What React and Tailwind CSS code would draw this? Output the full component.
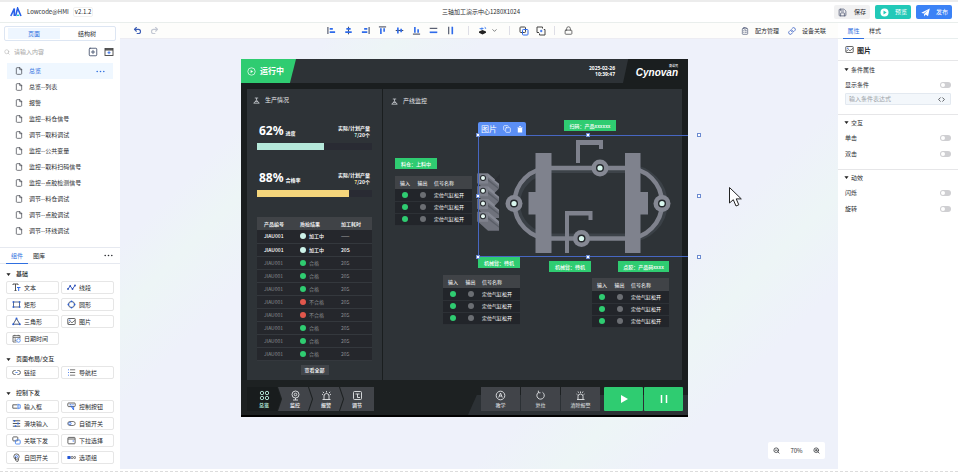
import React from "react";
import {
  ChevronDown, ClipboardList, Code, Copy, File, Link, Lock, Redo2, Save, Search, SquarePlus, Undo2, ZoomIn, ZoomOut,
} from "lucide-react";

const pages = [
  "总览", "总览--列表", "报警", "监控--料仓信号", "调节--取料调试", "监控--公共变量",
  "监控--取料扫码信号", "监控--点胶检测信号", "调节--料仓调试", "调节--点胶调试", "调节--环线调试",
];

const ic = "size-[9px] shrink-0";

const TextIcon = () => (
  <svg className={ic} viewBox="0 0 9 9" fill="none">
    <path d="M1 2V1H6V2M3.5 1V7.5M2.5 7.5H4.5" stroke="#444" strokeWidth="0.9" />
    <path d="M5 4.5H8.5M6.7 4.5V8" stroke="#2f6bea" strokeWidth="1" />
  </svg>
);
const PolyIcon = () => (
  <svg className={ic} viewBox="0 0 9 9" fill="none">
    <path d="M1 6L3.2 3L5.5 6L8 2.5" stroke="#2b4fb8" strokeWidth="0.9" />
    <g fill="#2b4fb8"><circle cx="1" cy="6" r="0.9" /><circle cx="3.2" cy="3" r="0.9" /><circle cx="5.5" cy="6" r="0.9" /><circle cx="8" cy="2.5" r="0.9" /></g>
  </svg>
);
const RectIcon = () => (
  <svg className={ic} viewBox="0 0 9 9">
    <rect x="1.5" y="2" width="6" height="5" fill="none" stroke="#3a4a6a" strokeWidth="0.8" />
    <g fill="#2b5fd8"><rect x="0.6" y="1.2" width="1.6" height="1.6" /><rect x="6.8" y="1.2" width="1.6" height="1.6" /><rect x="0.6" y="6.2" width="1.6" height="1.6" /><rect x="6.8" y="6.2" width="1.6" height="1.6" /></g>
  </svg>
);
const CircleIcon = () => (
  <svg className={ic} viewBox="0 0 9 9">
    <circle cx="4.5" cy="4.5" r="3" fill="none" stroke="#3a4a6a" strokeWidth="0.9" />
    <g fill="#2b5fd8"><circle cx="4.5" cy="1.4" r="0.9" /><circle cx="4.5" cy="7.6" r="0.9" /><circle cx="1.4" cy="4.5" r="0.9" /><circle cx="7.6" cy="4.5" r="0.9" /></g>
  </svg>
);
const TriIcon = () => (
  <svg className={ic} viewBox="0 0 9 9">
    <path d="M4.5 1.5L7.8 7.2H1.2Z" fill="none" stroke="#3a4a6a" strokeWidth="0.9" />
    <g fill="#2b5fd8"><circle cx="4.5" cy="1.6" r="1" /><circle cx="7.8" cy="7.2" r="1" /><circle cx="1.2" cy="7.2" r="1" /></g>
  </svg>
);
const ImgIcon = () => (
  <svg className={ic} viewBox="0 0 9 9" fill="none">
    <rect x="0.8" y="1.5" width="7.4" height="6" rx="0.6" stroke="#555" strokeWidth="0.9" />
    <path d="M1 6.5L3.5 4.6L5 5.8L8 3.2" stroke="#555" strokeWidth="0.8" />
    <circle cx="2.8" cy="3.3" r="0.7" fill="#2f6bea" />
  </svg>
);
const InputIcon = () => (
  <svg className={ic} viewBox="0 0 9 9" fill="none">
    <path d="M5.5 2.8H0.8V6.2H5.5" stroke="#555" strokeWidth="0.9" />
    <path d="M6 2.8H8.2V6.2H6M6 1.8V7.2" stroke="#4a86f0" strokeWidth="0.9" />
  </svg>
);
const ControlIcon = () => (
  <svg className={ic} viewBox="0 0 9 9" fill="none">
    <rect x="0.8" y="1" width="7.4" height="3.6" rx="0.8" stroke="#555" strokeWidth="0.9" />
    <path d="M2.6 2.8H4.4M5.4 2.8H6.6" stroke="#2f6bea" strokeWidth="1" />
    <path d="M4 4L6.6 8V5.5Z" stroke="#2f6bea" strokeWidth="0.9" />
  </svg>
);
const SliderIcon = () => (
  <svg className={ic} viewBox="0 0 9 9" fill="none">
    <path d="M0.8 1.8H8.2M0.8 4.5H8.2M0.8 7.2H8.2" stroke="#444" strokeWidth="0.9" />
    <path d="M2.5 0.9V2.7M6 3.6V5.4M3.5 6.3V8.1" stroke="#2f6bea" strokeWidth="1.3" />
  </svg>
);
const SwitchIcon = () => (
  <svg className={ic} viewBox="0 0 9 9" fill="none">
    <rect x="0.8" y="2.5" width="7.4" height="4" rx="2" stroke="#555" strokeWidth="0.8" />
    <circle cx="2.9" cy="4.5" r="1.2" stroke="#2f6bea" strokeWidth="0.8" />
  </svg>
);
const RelateIcon = () => (
  <svg className={ic} viewBox="0 0 9 9" fill="none">
    <rect x="0.8" y="0.9" width="5" height="4" rx="0.8" stroke="#555" strokeWidth="0.9" />
    <rect x="3.4" y="4" width="4.8" height="4" rx="0.8" stroke="#4a86f0" strokeWidth="0.9" />
  </svg>
);
const SelectIcon = () => (
  <svg className={ic} viewBox="0 0 9 9" fill="none">
    <rect x="0.9" y="1.4" width="7.2" height="6.4" rx="0.8" stroke="#555" strokeWidth="0.9" />
    <path d="M1 3H8" stroke="#555" strokeWidth="0.9" /><path d="M5.6 5H7" stroke="#2f6bea" strokeWidth="0.9" />
  </svg>
);
const ReturnIcon = () => (
  <svg className={ic} viewBox="0 0 9 9" fill="none">
    <circle cx="4.5" cy="3.6" r="2.7" stroke="#555" strokeWidth="0.9" /><circle cx="4.5" cy="3.6" r="1" stroke="#2f6bea" strokeWidth="0.8" />
    <path d="M3.5 4V7L4.5 8.3H6L6.6 6" stroke="#555" strokeWidth="0.9" />
  </svg>
);
const OptionIcon = () => (
  <svg className={ic} viewBox="0 0 9 9" fill="none">
    <rect x="0.4" y="3" width="3.2" height="3" rx="0.6" fill="#2457d6" />
    <circle cx="5.1" cy="4.5" r="1.1" stroke="#555" strokeWidth="0.8" /><circle cx="7.7" cy="4.5" r="1" stroke="#555" strokeWidth="0.8" />
  </svg>
);
const LinkIcon = () => (
  <svg className={ic} viewBox="0 0 9 9" fill="none" strokeWidth="0.9">
    <path d="M3.6 2.5H2.6A2 2 0 0 0 2.6 6.5H3.6M5.4 2.5H6.4A2 2 0 0 1 6.4 6.5H5.4" stroke="#555" /><path d="M3.4 4.5H5.6" stroke="#4a86f0" />
  </svg>
);
const NavIcon = () => (
  <svg className={ic} viewBox="0 0 9 9" fill="none" strokeWidth="0.8">
    <path d="M3 1.8H8.2M3 4.5H8.2M3 7.2H8.2" stroke="#555" /><path d="M1 1.8H2M1 4.5H2M1 7.2H2" stroke="#2f6bea" />
  </svg>
);
const DateIcon = () => (
  <svg className={ic} viewBox="0 0 9 9" fill="none" strokeWidth="0.8">
    <path d="M4.5 8H1V1.6H8V4.5M1 3.4H8M2.8 0.8V2.2M6.2 0.8V2.2M2.5 5H4M2.5 6.4H4" stroke="#555" />
    <circle cx="6.5" cy="6.5" r="1.8" stroke="#4a86f0" />
  </svg>
);

const groups = [
  { title: "基础", items: [["文本", TextIcon], ["线段", PolyIcon], ["矩形", RectIcon], ["圆形", CircleIcon], ["三角形", TriIcon], ["图片", ImgIcon], ["日期时间", DateIcon]] },
  { title: "页面布局/交互", items: [["链接", LinkIcon], ["导航栏", NavIcon]] },
  { title: "控制下发", items: [["输入框", InputIcon], ["控制按钮", ControlIcon], ["滑块输入", SliderIcon], ["自锁开关", SwitchIcon], ["关联下发", RelateIcon], ["下拉选择", SelectIcon], ["自回开关", ReturnIcon], ["选项组", OptionIcon]] },
];

const Caret = () => (
  <svg className="size-[5px] shrink-0" viewBox="0 0 5 5"><path d="M0.4 1.2H4.6L2.5 4Z" fill="#222" /></svg>
);
const Dots = ({ className }) => (
  <svg className={`h-[3px] w-[9px] ${className}`} viewBox="0 0 9 3" fill="currentColor"><circle cx="1.2" cy="1.5" r="0.8" /><circle cx="4.5" cy="1.5" r="0.8" /><circle cx="7.8" cy="1.5" r="0.8" /></svg>
);

function Header() {
  return (
    <header className="flex h-[23px] shrink-0 items-center border-t-2 border-b border-t-[#ececec] border-b-[#e9eeec] bg-white px-[6px]">
      <div className="flex flex-1 items-center pl-1">
        <svg className="h-[10px] w-3" viewBox="0 0 12 10" fill="none">
          <path d="M0.8 9L4.3 1.5V9" stroke="#2a62e8" strokeWidth="1.6" />
          <path d="M5.6 9L7.6 1.2L11 9" stroke="#2a62e8" strokeWidth="1.6" />
          <path d="M7 8.3H9.2" stroke="#21c7c0" strokeWidth="1.4" />
        </svg>
        <span className="ml-[5px]">Lowcode@HMI</span>
        <span className="ml-1 rounded-xs border border-[#f1f1f1] px-px">v2.1.2</span>
      </div>
      <h1>三轴加工演示中心1280X1024</h1>
      <div className="flex flex-1 justify-end gap-[5px]">
        <button className="flex h-[14px] w-9 items-center justify-between rounded-xs bg-[#f1f1f2] pr-1 pl-1"><Save className="size-[9px] text-[#4b5470]" />保存</button>
        <button className="flex h-[14px] w-9 items-center justify-between rounded-xs bg-[#22c9b8] pr-1 pl-[5px] text-white">
          <svg className="size-[9px]" viewBox="0 0 9 9"><circle cx="4.5" cy="4.5" r="4" fill="#fff" /><path d="M3.5 2.5V6.5L6.6 4.5Z" fill="#22c9b8" /></svg>预览
        </button>
        <button className="flex h-[14px] w-9 items-center justify-between rounded-xs bg-[#3b82f6] pr-1 pl-[5px] text-white">
          <svg className="size-[9px]" viewBox="0 0 9 9"><path d="M0.3 4.8L8.8 0.4L7 8.2L4.6 6.6L3.4 8.5L3 5.9L7 2.3L2.4 5.6Z" fill="#fff" /></svg>发布
        </button>
      </div>
    </header>
  );
}

function Sidebar() {
  return (
    <aside className="flex w-[120px] shrink-0 flex-col overflow-hidden bg-white">
      <div className="mx-1 mt-[3px] grid h-[15px] shrink-0 grid-cols-2 rounded-xs border border-[#dde6f3] p-px">
        <button className="ml-[2px] bg-[#eef6ff] text-[#2f6fe0]">页面</button>
        <button>结构树</button>
      </div>
      <div className="flex h-[22px] shrink-0 items-center pr-[6px] pl-1">
        <Search className="size-[6px] text-[#aaa]" />
        <input aria-label="搜索" placeholder="请输入内容" className="ml-1 min-w-0 flex-1 outline-none placeholder:text-[#a5a5a5]" />
        <button aria-label="新建页面"><SquarePlus className="size-[10px] text-[#3d4a68]" /></button>
        <button aria-label="新建分组" className="ml-[6px]">
          <svg className="size-[10px]" viewBox="0 0 10 10" fill="none" stroke="#444" strokeWidth="0.9"><rect x="1" y="1.5" width="8" height="7" /><path d="M1 2.8H9" strokeWidth="1.4" /><path d="M5 4.2V7.2M3.5 5.7H6.5" stroke="#2f6bea" /></svg>
        </button>
      </div>
      <ul className="shrink-0 px-[7px]">
        {pages.map((p, i) => (
          <li key={p} className={`flex h-4 items-center pl-2 ${i === 0 ? "bg-[#eff7ff] text-[#2f6fe0]" : ""}`}>
            <File className="size-2 text-[#33363f]" />
            <a href="#" className="ml-[6px]">{p}</a>
            {i === 0 && <Dots className="mr-2 ml-auto" />}
          </li>
        ))}
      </ul>
      <div className="mt-2 flex h-[17px] shrink-0 border-y border-[#e6e9f0] pr-[7px] pl-[6px]">
        <button className="-mb-px w-[22px] border-b border-[#2f6fe0] text-[#2f6fe0]">组件</button>
        <button className="w-[22px]">图库</button>
        <Dots className="my-auto ml-auto" />
      </div>
      <div className="flex flex-col gap-[7px] px-[6px] pt-[3px]">
        {groups.map((g) => (
          <section key={g.title}>
            <h2 className="flex h-[14px] items-center gap-[5px] font-medium"><Caret />{g.title}</h2>
            <div className="grid grid-cols-2 gap-x-[2px] gap-y-1">
              {g.items.map(([name, Icon]) => (
                <button key={name} className="flex h-[13px] items-center gap-[3px] rounded-xs border border-[#e6e6e6] pl-[5px] whitespace-nowrap"><Icon />{name}</button>
              ))}
            </div>
          </section>
        ))}
      </div>
      <div className="mt-1 mr-[61px] ml-[6px] h-1 shrink-0 rounded-t-xs border border-b-0 border-[#e6e6e6]" />
    </aside>
  );
}

const alignIcons = [
  ["左对齐", "M1 1V9", "M3 3.2H6.5M3 6.8H9"],
  ["水平居中", "M5 0.8V9.2", "M2.6 3.2H7.4M1.4 6.8H8.6"],
  ["右对齐", "M9 1V9", "M3.5 3.2H7M1 6.8H7"],
  ["顶对齐", "M1 1H9", "M3.2 2.6V9M6.8 2.6V6.5"],
  ["垂直居中", "M0.8 5H9.2", "M3.2 1.8V8.2M6.8 3V7"],
  ["底对齐", "M1 9H9", "M3.2 1V7.4M6.8 3.5V7.4"],
  ["纵向等距", "M0.8 2.6H9.2", "M0.8 7H9.2"],
  ["横向等距", "M3 0.8V9.2", "M7 0.8V9.2"],
];
const Sep = () => <span className="h-[9px] w-px bg-[#dedee6]" />;

function Toolbar() {
  return (
    <div className="flex h-4 shrink-0 items-center justify-between border-b border-[#ececf2] bg-[#fdfdfb] pr-3 pl-[13px]">
      <div className="flex gap-2">
        <button aria-label="撤销"><Undo2 className="size-[9px] text-[#3c5db5]" strokeWidth={3} /></button>
        <button aria-label="重做"><Redo2 className="size-[9px] text-[#c3c8d3]" strokeWidth={3} /></button>
      </div>
      <div className="flex items-center">
        <div className="flex gap-2">
          {alignIcons.map(([label, dark, blue]) => (
            <button key={label} aria-label={label}>
              <svg className="size-[9px]" viewBox="0 0 10 10" fill="none"><path d={dark} stroke="#454c60" strokeWidth="1.2" /><path d={blue} stroke="#2f6bea" strokeWidth="1.8" /></svg>
            </button>
          ))}
        </div>
        <span className="w-[13px]" /><Sep /><span className="w-[9px]" />
        <button aria-label="层级" className="flex items-center gap-1">
          <svg className="size-[9px]" viewBox="0 0 9 9"><path d="M1 5.5L4.5 3.9L8 5.5V6.8L4.5 8.6L1 6.8Z" fill="#222" /><path d="M1 2.8L4 1.4L6 2.4L3.8 3.8ZM6.5 0.5L8.4 2.2L7 3Z" fill="#4a86f0" /></svg>
          <ChevronDown className="size-[7px]" />
        </button>
        <span className="w-[11px]" /><Sep /><span className="w-[9px]" />
        <button aria-label="组合">
          <svg className="size-[10px]" viewBox="0 0 10 10" fill="none"><rect x="1" y="1" width="5.5" height="5.5" rx="0.8" stroke="#444" /><rect x="3.5" y="3.5" width="5.5" height="5.5" rx="0.8" stroke="#2f6bea" /></svg>
        </button>
        <button aria-label="取消组合" className="ml-[7px]">
          <svg className="size-[10px]" viewBox="0 0 10 10" fill="none" stroke="#444"><path d="M3 6.5H1V1H6.5V2.5M3.5 7.5V9H9V3.5H7.8" /><path d="M4 5H6.4M5.2 3.8V6.2" stroke="#2f6bea" /></svg>
        </button>
        <span className="w-2" /><Sep /><span className="w-[9px]" />
        <button aria-label="锁定"><Lock className="size-[9px] text-[#444]" /></button>
      </div>
      <div className="flex items-center">
        <button className="flex items-center gap-[6px]"><ClipboardList className="size-2 text-[#4a5573]" />配方管理</button>
        <button className="ml-[9px] flex items-center gap-[6px]"><Link className="size-2 text-[#3c62c4]" strokeWidth={2.5} />设备关联</button>
      </div>
    </div>
  );
}

const results = [
  ["加工中", "——", "run"], ["加工中", "20S", "run"], ["合格", "20S", "ok"], ["合格", "20S", "ok"], ["合格", "20S", "ok"],
  ["不合格", "20S", "bad"], ["不合格", "20S", "bad"], ["合格", "20S", "ok"], ["合格", "20S", "ok"], ["合格", "20S", "ok"],
];
const dot = { run: "bg-[#cdf3ea]", ok: "bg-[#2fcc71]", bad: "bg-[#e2574c]" };

const PanelTitle = ({ children }) => (
  <h2 className="flex items-center gap-[5px] text-[#e6e8ea]">
    <svg className="size-[7px]" viewBox="0 0 7 7" fill="none" stroke="#c8ccd0" strokeWidth="0.8"><path d="M1.8 1H5.2M3.5 1V3L1 6M3.5 3L6 6M0.5 6.2H6.5M2 4.6H5" /></svg>
    {children}
  </h2>
);

function Progress({ value, label, fill, accent }) {
  return (
    <div>
      <div className="flex items-center">
        <span className="ml-[2px] font-['Noto_Sans',sans-serif] text-[12px] leading-[14px] font-bold">{value}</span>
        <span className="ml-[2px] pt-[3px] text-[5px] font-bold">{label}</span>
        <span className="mr-[2px] ml-auto text-right text-[5px] leading-[7px] font-bold">实际/计划产量<br /><span className={accent}>7</span>/20个</span>
      </div>
      <div className="mt-[5px] h-[7px] bg-[#292b33]"><div className={`h-full ${fill}`} /></div>
    </div>
  );
}

function SignalTable({ className }) {
  return (
    <table className={`absolute w-[77px] table-fixed border-collapse text-[5px] text-white ${className}`}>
      <thead>
        <tr className="h-[13px] bg-[#404347]"><th className="w-5 font-normal">输入</th><th className="w-[15px] font-normal">输出</th><th className="pl-1 text-left font-normal">信号名称</th></tr>
      </thead>
      <tbody>
        {[0, 1, 2].map((i) => (
          <tr key={i} className="h-3 border-b border-[#2d3136] bg-[#22252a]">
            <td><span className="mx-auto block size-[6px] rounded-full bg-[#2fcc71]" /></td>
            <td><span className="mx-auto block size-[6px] rounded-full bg-[#6b6e73]" /></td>
            <td className="pl-1 whitespace-nowrap">定位气缸松开</td>
          </tr>
        ))}
      </tbody>
    </table>
  );
}

const Tag = ({ className, children }) => (
  <span className={`absolute flex h-[11px] items-center justify-center bg-[#2fcc71] text-[5px] font-medium whitespace-nowrap text-white ${className}`}>{children}</span>
);

function Machine() {
  return (
    <svg className="absolute top-[76px] left-[237px] h-[122px] w-[220px] overflow-visible" viewBox="478 135 220 122" fill="none">
      <path d="M551 171.5H625M551 235H625" stroke="#3d4349" strokeWidth="3" />
      <path d="M549 172.5A32 32 0 0 0 518 203.5A32 32 0 0 0 549 235M628 166A40 37 0 0 1 665.5 203.5A40 37 0 0 1 628 241" stroke="#3b4147" strokeWidth="4" />
      <rect x="514.5" y="168" width="147.5" height="70.5" rx="35" stroke="#7f828d" strokeWidth="4.5" />
      <g fill="#7f828d">
        <path d="M535.5 153H551.5V253H535.5V214.5H528.5V192H535.5Z" />
        <path d="M625 153H640.5V192H648V214.5H640.5V253H625Z" />
        <path d="M576 140H603V149H599V145H580V163H576Z" />
        <path d="M565 211H592.5V220H588.5V215.5H569V253H565Z" />
      </g>
      {[[600, 168], [514, 203.5], [662, 203.5], [581.5, 238.5]].map(([x, y]) => (
        <g key={x}>
          <circle cx={x} cy={y} r="8.5" fill="#858893" />
          <circle cx={x} cy={y} r="4" fill="#24282c" />
          <circle cx={x} cy={y} r="2.6" fill="#d9f7ee" />
        </g>
      ))}
      {[178, 190.8, 203.5, 216.3].map((y) => (
        <g key={y}>
          <path d={`M477.500 ${y - 4.5}H488L499 ${y + 5}V${y + 14.5}H488L477.500 ${y + 5}Z`} fill="#6f727c" />
          <path d={`M488 ${y - 4.5}L499 ${y + 5}V${y + 8}L488 ${y - 1}Z`} fill="#858893" />
          <path d={`M488 ${y + 1}L499 ${y + 10}V${y + 11.5}L488 ${y + 3}Z`} fill="#5a5e67" />
          <rect x="477.5" y={y - 4.5} width="10.5" height="10" fill="#7f828d" />
          <circle cx="483" cy={y} r="3" fill="#24282c" />
          <circle cx="483" cy={y} r="2" fill="#e6f7f2" />
        </g>
      ))}
      <path d="M494.5 180L500 174V184.500ZM494.500 193L500 187.500V197.500ZM494.500 206L500 200V210.500Z" fill="#2a2e33" />
    </svg>
  );
}

const Handle = ({ className }) => <span className={`absolute size-1 border border-[#6c8bd0] bg-white ${className}`} />;

const navs = [
  ["总览", <><circle cx="3" cy="3" r="1.7" /><circle cx="8" cy="3" r="1.7" /><circle cx="3" cy="8" r="1.7" /><circle cx="8" cy="8" r="1.7" /></>],
  ["监控", <><circle cx="5.5" cy="4.5" r="3.5" /><circle cx="5.5" cy="4.5" r="1.3" /><path d="M3 10H8M5.5 8V10" /></>],
  ["报警", <path d="M1.5 9.5H9.5M3 9.5V6A2.5 2.5 0 0 1 8 6V9.5M5.5 1V2.5M1 4L2.3 5M10 4L8.7 5M1.8 1.8L3 3M9.2 1.8L8 3" />],
  ["调节", <><rect x="1.5" y="1.5" width="8" height="8" rx="1" /><path d="M3.5 4H7.5M5.5 4V7.5H8" /></>],
];
const navShape = [
  "[clip-path:polygon(0_0,88%_0,100%_50%,88%_100%,0_100%)] bg-[#181c1d] text-[#b9eedd]",
  "[clip-path:polygon(0_0,88%_0,100%_50%,88%_100%,0_100%,12%_50%)] bg-[#414449] text-[#e3e5e8]",
  "[clip-path:polygon(0_0,88%_0,100%_50%,88%_100%,0_100%,12%_50%)] bg-[#414449] text-[#e3e5e8]",
  "[clip-path:polygon(0_0,100%_0,100%_100%,0_100%,12%_50%)] bg-[#414449] text-[#e3e5e8]",
];
const actions = [
  ["教学", <><circle cx="5.5" cy="5.5" r="4.3" /><path d="M3.7 7.5L5.5 3L7.3 7.5M4.3 6H6.7" /></>],
  ["复位", <path d="M3.2 2.6A3.7 3.7 0 1 0 7.5 2.3M3.4 0.7V2.8H5.5" />],
  ["清除报警", <path d="M2 9.5H9.5M3 9.5V6.5A2.5 2.5 0 0 1 8 6.5V9.5M5.5 1.5V3M1.5 4L2.6 5M9.5 4L8.4 5M8 1.5L7.4 2.8M3 1.5L3.6 2.8" />],
];
const Glyph = ({ children }) => <svg className="size-[11px]" viewBox="0 0 11 11" fill="none" stroke="currentColor" strokeWidth="0.9">{children}</svg>;

function Artboard() {
  return (
    <div className="relative flex h-[358px] w-[447px] shrink-0 flex-col bg-[#1a1e1f] text-white">
      <div className="flex h-6 items-stretch bg-[#2d3236]">
        <div className="flex w-[55px] items-center gap-1 bg-[#2fcc71] pl-[6px] text-[8px] font-bold [clip-path:polygon(0_0,100%_0,89%_100%,0_100%)]">
          <svg className="size-[9px]" viewBox="0 0 9 9" fill="none"><circle cx="4.5" cy="4.5" r="3.7" stroke="#fff" strokeWidth="0.7" /><path d="M3.6 2.9V6.1L6.1 4.5Z" fill="#fff" /></svg>
          运行中
        </div>
        <p className="mt-[6px] mr-2 ml-auto text-right font-['Noto_Sans',sans-serif] text-[5px] leading-[6px] font-bold">2025-02-26<br />10:39:47</p>
        <div className="flex w-[65px] flex-col items-end bg-[#1a1e1f] pt-[5px] pr-[10px] [clip-path:polygon(8%_0,100%_0,100%_100%,0_100%)]">
          <span className="text-[3px] leading-[4px]">赛诺梵</span>
          <b className="font-['Liberation_Sans',sans-serif] text-[10px] leading-[10px] italic">Cynovan</b>
        </div>
      </div>
      <div className="mx-[6px] mt-[6px] flex h-[291px] gap-px">
        <section className="flex w-[135px] flex-col bg-[#2e3337] px-[10px]">
          <div className="-ml-1 flex h-[22px] items-center"><PanelTitle>生产情况</PanelTitle></div>
          <div className="mt-[13px] flex flex-col gap-[21px]">
            <Progress value="62%" label="进度" fill="w-[58%] bg-[#b5e8da]" accent="text-[#b5e8da]" />
            <Progress value="88%" label="合格率" fill="w-[80%] bg-[#f5d67c]" accent="text-[#f5d67c]" />
          </div>
          <table className="mt-[20px] w-full table-fixed border-collapse text-[5px]">
            <thead>
              <tr className="h-[13px] bg-[#404347]"><th className="w-[43px] pl-[7px] text-left font-medium">产品编号</th><th className="w-[41px] text-left font-medium">质检结果</th><th className="text-left font-medium">加工耗时</th></tr>
            </thead>
            <tbody>
              {results.map(([r, t, k], i) => (
                <tr key={i} className={`h-[13px] border-b border-[#34383d] bg-[#25272c] ${i < 2 ? "font-medium text-white" : "text-[#8a8d91]"}`}>
                  <td className="pl-[7px]">JIAU001</td>
                  <td><span className="flex items-center gap-[3px]"><i className={`size-[6px] rounded-full ${dot[k]}`} />{r}</span></td>
                  <td>{t}</td>
                </tr>
              ))}
            </tbody>
          </table>
          <button className="mx-auto mt-[4px] h-[10px] w-7 bg-[#41454a] text-[5px] font-medium">查看全部</button>
        </section>
        <section className="flex-1 bg-[#2e3337] pt-2 pl-2"><PanelTitle>产线监控</PanelTitle></section>
      </div>
      <div className="relative flex flex-1 items-start bg-[#1d2122] pr-[5px] pl-[6px] pt-[7px]">
        <span className="absolute right-0 bottom-[2px] h-5 w-[220px] bg-[#2c3135] [clip-path:polygon(4%_0,100%_0,100%_100%,0_100%)]" />
        <span className="absolute inset-x-0 bottom-0 h-[2px] bg-black" />
        <nav className="relative flex h-6 text-[5px] font-bold">
          {navs.map(([n, g], i) => (
            <a key={n} href="#" className={`-mr-[3px] flex w-[34px] flex-col items-center justify-center ${navShape[i]}`}><Glyph>{g}</Glyph><span className="leading-[7px]">{n}</span></a>
          ))}
        </nav>
        <div className="relative ml-auto flex h-6 gap-px text-[5px] leading-[7px]">
          {actions.map(([n, g]) => (
            <button key={n} className="flex w-[39px] flex-col items-center justify-center bg-[#414449] text-[#e3e5e8]"><Glyph>{g}</Glyph>{n}</button>
          ))}
        </div>
        <div className="relative ml-1 flex h-6 gap-px">
          <button aria-label="启动" className="flex w-[39px] items-center justify-center rounded-[1px] bg-[#2fcc71]"><svg className="size-2" viewBox="0 0 8 8"><path d="M1 0L8 4L1 8Z" fill="#fff" /></svg></button>
          <button aria-label="暂停" className="flex w-[39px] items-center justify-center rounded-[1px] bg-[#2fcc71]"><svg className="size-2" viewBox="0 0 8 8"><path d="M1.5 0V8M6.5 0V8" stroke="#fff" strokeWidth="1.5" /></svg></button>
        </div>
      </div>

      {/* widgets placed freely on the artboard */}
      <Tag className="top-[99px] left-[154px] w-[42px]">料仓：上料中</Tag>
      <SignalTable className="top-[117px] left-[154px]" />
      <Machine />
      <Tag className="top-[61px] left-[323px] w-[52px]">扫码：产品xxxxxx</Tag>
      <Tag className="top-[198px] left-[237px] w-[42px]">机械臂：待机</Tag>
      <Tag className="top-[202px] left-[308px] w-[42px]">机械臂：待机</Tag>
      <Tag className="top-[202px] left-[377px] w-[51px]">点胶：产品码xxxx</Tag>
      <SignalTable className="top-[216px] left-[202px]" />
      <SignalTable className="top-[219px] left-[351px]" />
      <div className="absolute top-[76px] right-0 left-[237px] h-[122px] border-y border-l border-[#4767c2]" />
      <div className="absolute top-[63px] left-[237px] flex h-[14px] w-12 items-center justify-between rounded-t-[2px] bg-[#5b8ff5] px-[3px] text-[8px]">
        图片
        <Copy className="size-2" />
        <svg className="h-[7px] w-[6px]" viewBox="0 0 6 7"><path d="M0.8 1.9H5.2V6.6H0.8ZM0.4 0.9H2V0.3H4V0.9H5.6V1.4H0.4Z" fill="#fff" /></svg>
      </div>
      <Handle className="top-[74px] left-[235px]" /><Handle className="top-[74px] left-[345px]" /><Handle className="top-[74px] left-[456px]" />
      <Handle className="top-[135px] left-[235px]" /><Handle className="top-[135px] left-[456px]" />
      <Handle className="top-[196px] left-[235px]" /><Handle className="top-[196px] left-[345px]" /><Handle className="top-[196px] left-[456px]" />
    </div>
  );
}

function Toggle({ label }) {
  return (
    <label className="flex h-4 items-center justify-between">
      {label}
      <input type="checkbox" className="h-[6px] w-[11px] appearance-none rounded-full bg-[#cfcfd2] p-px before:block before:size-1 before:rounded-full before:bg-white" />
    </label>
  );
}
const Section = ({ title, className, children }) => (
  <section className={`px-[7px] ${className}`}>
    <h3 className="-ml-px flex h-[15px] items-center gap-[2px]"><Caret />{title}</h3>
    {children}
  </section>
);

function Inspector() {
  return (
    <aside className="w-[120px] shrink-0 bg-white">
      <div className="flex h-4 border-b border-[#e8eeee] pl-[5px]">
        <button className="-mb-px w-[21px] border-b border-[#2f6fe0] text-[#2f6fe0]">属性</button>
        <button className="w-[22px]">样式</button>
      </div>
      <h2 className="flex h-[22px] items-center gap-[3px] border-b border-[#e6e6e8] pl-[7px] text-[7px] font-bold"><ImgIcon />图片</h2>
      <Section title="条件属性" className="border-b border-[#e6e6e8] pt-px pb-[9px]">
        <Toggle label="显示条件" />
        <div className="flex h-3 items-center rounded-[1px] border border-[#e3e9f0] bg-[#f3f7fb] pr-[5px] pl-[3px]">
          <input aria-label="显示条件表达式" placeholder="输入条件表达式" className="min-w-0 flex-1 outline-none placeholder:text-[#9a9fa6]" />
          <Code className="size-[7px]" strokeWidth={2.5} />
        </div>
      </Section>
      <Section title="交互" className="border-b border-[#e6e6e8] pb-[7px]"><Toggle label="单击" /><Toggle label="双击" /></Section>
      <Section title="动效"><Toggle label="闪烁" /><Toggle label="旋转" /></Section>
    </aside>
  );
}

export default function App() {
  return (
    <div className="flex h-screen flex-col overflow-hidden bg-white font-['Noto_Sans_CJK_SC','Liberation_Sans',sans-serif] text-[6px] leading-[8px] text-[#2a2c30]">
      <Header />
      <div className="flex min-h-0 flex-1">
        <Sidebar />
        <div className="relative flex min-w-0 flex-1 flex-col">
          <Toolbar />
          <main className="flex flex-1 items-start justify-center overflow-hidden bg-[#eef1fa] bg-[linear-gradient(135deg,#eef1fa_0%,#eef1fa_18%,#edf5f6_24%,#eef1fa_32%,#eef1fa_68%,#edf5f6_76%,#eef1fa_84%)] pt-5 pr-[29px]">
            <Artboard />
          </main>
          <div className="absolute right-[13px] bottom-[10px] flex h-[17px] w-[57px] items-center justify-between rounded-[2px] bg-white px-[5px]">
            <button aria-label="缩小"><ZoomOut className="size-[7px]" strokeWidth={2.5} /></button>
            <span>70%</span>
            <button aria-label="放大"><ZoomIn className="size-[7px]" strokeWidth={2.5} /></button>
          </div>
          <svg className="absolute top-[163px] right-[95px] h-[22px] w-[15px]" viewBox="0 0 15 22"><path d="M1.5 1.5V17L5.3 13.7L8 20L10.8 18.8L8.2 12.9H13.3Z" fill="#fff" stroke="#222" strokeWidth="1" /></svg>
        </div>
        <Inspector />
      </div>
      <div className="h-[3px] shrink-0 border-b border-dashed border-[#dcdcdc]" />
    </div>
  );
}
